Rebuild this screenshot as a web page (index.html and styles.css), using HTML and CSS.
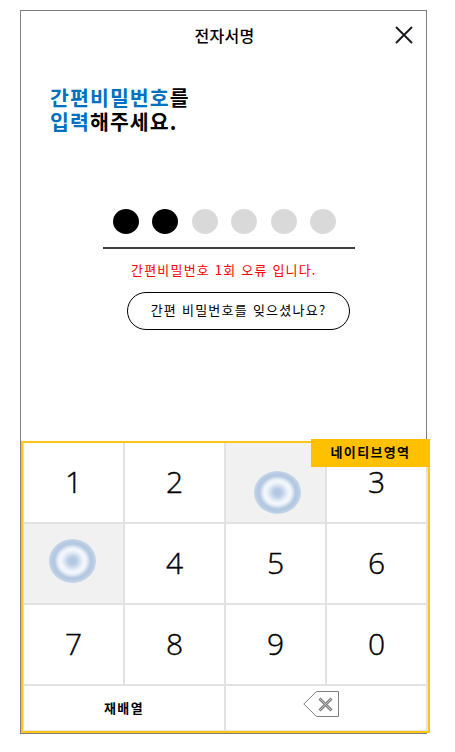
FILE: index.html
```
<!DOCTYPE html>
<html lang="ko">
<head>
    <meta charset="UTF-8">
    <meta name="viewport" content="width=device-width, initial-scale=1.0">
    <title>전자서명</title>
    <link rel="stylesheet" href="styles.css">
</head>
<body>

<div class="phone">
    <div class="header">
        <h1 class="title">전자서명</h1>
        <button class="close" aria-label="닫기">
            <svg width="18" height="18" viewBox="0 0 18 18">
                <path d="M1 1L17 17M17 1L1 17" fill="none" stroke="#1a1a1f" stroke-width="1.9"/>
            </svg>
        </button>
    </div>

    <h2 class="heading"><span class="blue">간편비밀번호</span>를<br><span class="blue">입력</span>해주세요.</h2>

    <!-- 비밀번호 입력 상태 -->
    <div class="pin">
        <span class="dot filled"></span>
        <span class="dot filled"></span>
        <span class="dot"></span>
        <span class="dot"></span>
        <span class="dot"></span>
        <span class="dot"></span>
    </div>
    <p class="error">간편비밀번호 1회 오류 입니다.</p>
    <button class="forgot">간편 비밀번호를 잊으셨나요?</button>

    <!-- 보안 키패드 -->
    <div class="keypad">
        <span class="badge">네이티브영역</span>
        <div class="keys">
            <button class="key">1</button>
            <button class="key">2</button>
            <button class="key blank low"><span class="ring"></span></button>
            <button class="key">3</button>

            <button class="key blank"><span class="ring"></span></button>
            <button class="key">4</button>
            <button class="key">5</button>
            <button class="key">6</button>

            <button class="key">7</button>
            <button class="key">8</button>
            <button class="key">9</button>
            <button class="key">0</button>

            <button class="key wide">재배열</button>
            <button class="key wide delete" aria-label="삭제">
                <svg width="37" height="27" viewBox="0 0 37 27">
                    <path d="M13.5 0.5H35.5V25.5H13.5L0.8 13Z" fill="#fff" stroke="#7f7f7f"/>
                    <path d="M16.5 7.5L28.5 19.5M28.5 7.5L16.5 19.5" stroke="#7f7f7f" stroke-width="3"/>
                    <path d="M16.8 7.8L28.2 19.2M28.2 7.8L16.8 19.2" stroke="#c4c4c4" stroke-width="1"/>
                </svg>
            </button>
        </div>
    </div>
</div>

</body>
</html>
```
FILE: styles.css
```
* {
    box-sizing: border-box;
}
body {
    margin: 0;
    padding: 10px 20px;
    background-color: #fff;
    color: #000;
    font-family: "Noto Sans CJK KR", sans-serif;
}
button {
    padding: 0;
    border: none;
    background: none;
    color: inherit;
    font-family: inherit;
    cursor: pointer;
}
.phone {
    display: flex;
    flex-direction: column;
    width: 407px;
    height: 724px;
    border: 1px solid #7f7f7f;
}
.header {
    display: grid;
    grid-template-columns: 1fr auto 1fr;
    align-items: center;
    height: 48px;
    padding: 0 13px;
}
.title {
    grid-column: 2;
    margin: 0 0 0 2px;
    font-size: 16px;
    font-weight: 500;
    line-height: 24px;
    letter-spacing: 0.3px;
}
.close {
    justify-self: end;
    height: 18px;
}
.close svg {
    display: block;
}
.heading {
    margin: 26px 0 0 29px;
    font-size: 20.5px;
    font-weight: 700;
    line-height: 24px;
    letter-spacing: 1.1px;
}
.blue {
    color: #0070c0;
}
.pin {
    display: flex;
    justify-content: space-between;
    width: 252px;
    height: 40px;
    margin: 76px 0 0 82px;
    padding: 0 19px 0 10px;
    border-bottom: 2px solid #404040;
}
.dot {
    width: 26px;
    height: 25px;
    border-radius: 50%;
    background-color: #d9d9d9;
}
.dot.filled {
    background-color: #000;
}
.error {
    margin: 11px 0 0 110px;
    font-size: 13px;
    line-height: 20px;
    letter-spacing: 1.2px;
    color: #f00;
}
.forgot {
    width: 223px;
    height: 38px;
    margin: 12px 0 0 106px;
    padding-bottom: 4px;
    border: 1px solid #000;
    border-radius: 19px;
    font-size: 13px;
    letter-spacing: 1.25px;
}

/* 키패드 */
.keypad {
    position: relative;
    width: 409px;
    height: 292px;
    margin-top: 111px;
    border: 2px solid #ffc619;
}
.keys {
    display: grid;
    grid-template-columns: repeat(4, 99px);
    grid-template-rows: 79px 79px 79px 44px;
    gap: 2px;
    padding: 0 2px 1px 1px;
    background-color: #e2e2e2;
}
.key {
    display: flex;
    justify-content: center;
    align-items: center;
    padding-bottom: 2px;
    background-color: #fff;
    font-family: "Open Sans", sans-serif;
    font-size: 30px;
    font-weight: 300;
    -webkit-text-stroke: 0.4px #000;
}
.key.blank {
    padding-bottom: 0;
    background-color: #f1f1f1;
}
.key.wide {
    grid-column: span 2;
    font-family: "Noto Sans CJK KR", sans-serif;
    font-size: 13px;
    font-weight: 700;
    letter-spacing: 1.3px;
    -webkit-text-stroke: 0;
}
.ring {
    width: 47px;
    height: 44px;
    margin: -5px 2px 0 0;
    border-radius: 50%;
    background: radial-gradient(closest-side, #b0c6e1 0%, #b4c9e3 15%, #eef3fa 45%, #f5f8fc 54%, #e5edf6 62%, #b4c8e2 77%, #b4c8e2 85%, #c6d6e9 100%);
}
.low .ring {
    height: 43px;
    margin: 20px 0 0 4px;
}
.key.delete {
    align-items: flex-start;
    padding: 5px 9px 0 0;
}
.badge {
    position: absolute;
    top: -4px;
    right: -2px;
    z-index: 1;
    width: 119px;
    height: 28px;
    background-color: #ffc000;
    font-size: 13px;
    font-weight: 700;
    line-height: 26px;
    letter-spacing: 1.35px;
    text-align: center;
}
```
